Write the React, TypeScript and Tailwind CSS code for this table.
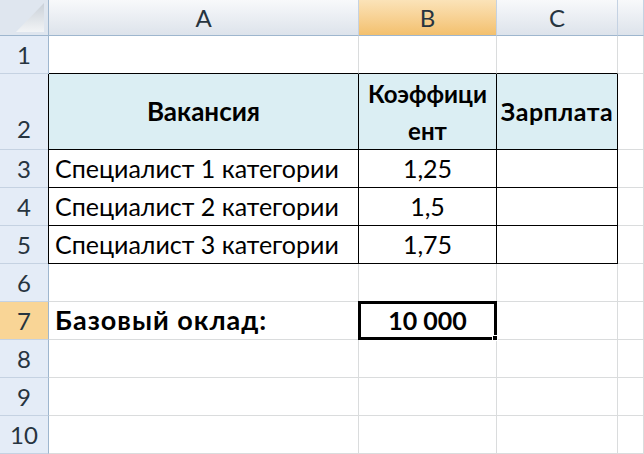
import React from 'react';

const font = { fontFamily: 'Lato, "Open Sans", sans-serif' };

const grid = 'border-r border-b border-[#dadcdd]';

const RowHead = ({ n, active = false, bottom = false }: { n: number; active?: boolean; bottom?: boolean }) => (
  <div
    className={`flex justify-center border-r border-b border-r-[#9eb6ce] border-b-[#c5d2e2] text-[24px] text-[#27343f] ${
      bottom ? 'items-end pb-[2px]' : 'items-center'
    } ${active ? 'bg-[#f9d596]' : 'bg-[#e4ecf7]'}`}
  >
    {n}
  </div>
);

const ColHead = ({ label, active = false }: { label: string; active?: boolean }) => (
  <div
    className={`flex items-center justify-center border-r border-b border-r-[#c5d2e2] border-b-[#9eb6ce] text-[24px] text-[#27343f] ${
      active ? 'bg-gradient-to-b from-[#fbe3b8] to-[#f3c06d]' : 'bg-gradient-to-b from-[#f8f9fb] to-[#dde3eb]'
    }`}
  >
    {label}
  </div>
);

const rows = [
  { n: 3, name: 'Специалист 1 категории', k: '1,25' },
  { n: 4, name: 'Специалист 2 категории', k: '1,5' },
  { n: 5, name: 'Специалист 3 категории', k: '1,75' },
];

export default function App() {
  return (
    <div
      className="w-[644px] h-[454px] overflow-hidden bg-white text-black grid grid-cols-[49px_310px_138px_121px_1fr] grid-rows-[36px_38px_76px_repeat(8,38px)]"
      style={font}
    >
      {/* Угол */}
      <div className="relative bg-[#dfe6ef] border-r border-b border-[#9eb6ce]">
        <svg className="absolute inset-0" width="48" height="35" viewBox="0 0 48 35">
          <defs>
            <linearGradient id="tri" x1="0" y1="0" x2="0" y2="1">
              <stop offset="0" stopColor="#c9d0d8" />
              <stop offset="1" stopColor="#f2f4f6" />
            </linearGradient>
          </defs>
          <polygon points="44,3 44,32 16,32" fill="url(#tri)" />
        </svg>
      </div>
      <ColHead label="A" />
      <ColHead label="B" active />
      <ColHead label="C" />
      <ColHead label="" />

      {/* 1 */}
      <RowHead n={1} />
      <div className="border-r border-b border-r-[#dadcdd] border-b-black" />
      <div className="border-r border-b border-r-[#dadcdd] border-b-black" />
      <div className="border-r border-b border-r-[#dadcdd] border-b-black" />
      <div className={grid} />

      {/* 2 */}
      <RowHead n={2} bottom />
      <div className="flex items-center justify-center bg-[#dbeef3] border-l border-r border-b border-black -ml-px font-bold text-[26px]">
        Вакансия
      </div>
      <div className="flex items-center justify-center text-center bg-[#dbeef3] border-r border-b border-black font-bold text-[24px] leading-[37px]">
        Коэффици
        <br />
        ент
      </div>
      <div className="flex items-center justify-center bg-[#dbeef3] border-r border-b border-black font-bold text-[25px] tracking-[0.5px]">
        Зарплата
      </div>
      <div className={grid} />

      {rows.map((r) => (
        <React.Fragment key={r.n}>
          <RowHead n={r.n} />
          <div className="flex items-center pl-[6px] border-l border-r border-b border-black -ml-px text-[25px]">
            {r.name}
          </div>
          <div className="flex items-center justify-center border-r border-b border-black text-[25px]">{r.k}</div>
          <div className="border-r border-b border-black" />
          <div className={grid} />
        </React.Fragment>
      ))}

      {/* 6 */}
      <RowHead n={6} />
      <div className={grid} />
      <div className={grid} />
      <div className={grid} />
      <div className={grid} />

      {/* 7 */}
      <RowHead n={7} active />
      <div className={`flex items-center pl-[6px] font-bold text-[27px] tracking-[1px] ${grid}`}>Базовый оклад:</div>
      <div className="relative flex items-center justify-center -mt-px -ml-px border-[3px] border-black font-bold text-[25px]">
        10 000
        <span className="absolute -right-[4px] -bottom-[4px] w-[6px] h-[6px] bg-black border border-white" />
      </div>
      <div className={grid} />
      <div className={grid} />

      {[8, 9, 10].map((n) => (
        <React.Fragment key={n}>
          <RowHead n={n} />
          <div className={grid} />
          <div className={grid} />
          <div className={grid} />
          <div className={grid} />
        </React.Fragment>
      ))}
    </div>
  );
}
